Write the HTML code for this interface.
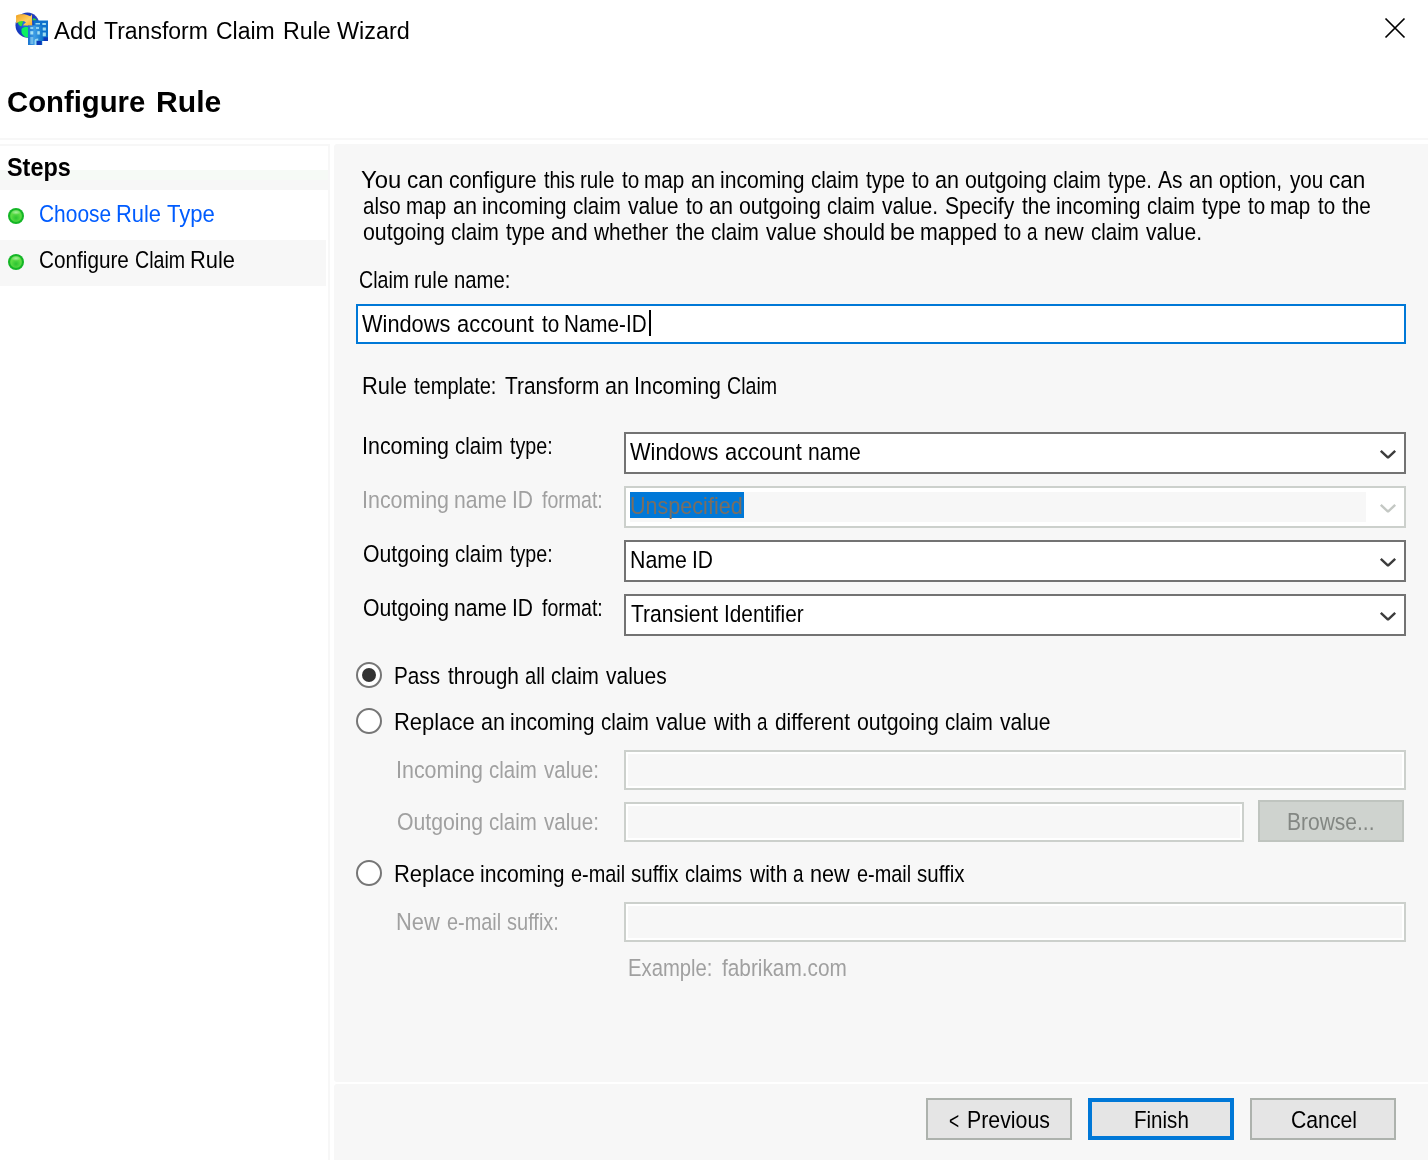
<!DOCTYPE html>
<html lang="en"><head><meta charset="utf-8"><title>Add Transform Claim Rule Wizard</title>
<style>
html,body{margin:0;padding:0}
body{width:1428px;height:1160px;position:relative;overflow:hidden;background:#fff;font-family:"Liberation Sans",sans-serif;}
.a{position:absolute;box-sizing:border-box}
.t{position:absolute;white-space:pre;transform-origin:0 0;line-height:normal;display:block}
.combo{position:absolute;box-sizing:border-box;left:624px;width:782px;height:42px;border:2px solid #737373;background:#fff}
.dis{position:absolute;box-sizing:border-box;border:2px solid #ccd0cc;background:#f7f7f7;box-shadow:inset 0 0 0 2px #fff}
.radio{position:absolute;box-sizing:border-box;left:356px;width:26px;height:26px;border-radius:50%;border:2px solid #767676;background:#fff}
.btn{position:absolute;box-sizing:border-box;top:1098px;width:146px;height:42px;border:2px solid #adb2ad;background:#e5e5e5}
.dot{position:absolute;width:16px;height:16px;border-radius:50%;left:8px;background:radial-gradient(ellipse 5px 2.5px at 50% 27%,#a8eea0 0,rgba(168,238,160,0) 100%),radial-gradient(circle closest-side at 50% 50%,rgba(20,182,38,0) 0,rgba(20,182,38,0) 66%,#14b626 80%,#14b626 100%),radial-gradient(circle 5px at 50% 62%,#2cc432 0,#5cdc44 100%)}
.ln{position:absolute;left:0;width:0;height:0;font-size:24.5px;line-height:1;color:#000}
.ln span{position:absolute;top:0;white-space:pre;transform-origin:0 0;display:block}
.t{line-height:1}

</style></head>
<body>
<!-- title bar icon -->
<svg class="a" style="left:10px;top:8px" width="44" height="42" viewBox="10 8 44 42">
 <defs>
  <radialGradient id="gl" cx="40%" cy="45%" r="65%"><stop offset="0" stop-color="#2a7ae0"/><stop offset="0.6" stop-color="#1438c0"/><stop offset="1" stop-color="#3a50b8"/></radialGradient>
  <linearGradient id="bf" x1="0" x2="1" y1="0" y2="0"><stop offset="0" stop-color="#1c74d0"/><stop offset="0.45" stop-color="#3c9ce4"/><stop offset="1" stop-color="#1478cc"/></linearGradient>
  <linearGradient id="ar" x1="0" x2="1" y1="0" y2="1"><stop offset="0" stop-color="#f0a020"/><stop offset="0.6" stop-color="#ffd060"/><stop offset="1" stop-color="#f8a828"/></linearGradient>
  <filter id="sf" x="-10%" y="-10%" width="120%" height="120%"><feGaussianBlur stdDeviation="0.55"/></filter>
  <clipPath id="gc"><ellipse cx="27.5" cy="25.2" rx="12" ry="12.6"/></clipPath>
 </defs>
 <g filter="url(#sf)">
  <ellipse cx="27.5" cy="25.2" rx="12" ry="12.6" fill="url(#gl)"/>
  <g clip-path="url(#gc)">
   <path d="M18.500 19.500c2-1.500 4-1 4.500 1s-1 3-1 4.500-2 1.500-3 0-2-4-.5-5.500z" fill="#30e038"/>
   <path d="M21.500 29c2-2 5-2.500 7-1.500v10c-3 .5-6-2-7-5z" fill="#08f060"/>
   <path d="M33 18.500c1.500-.5 3 .5 3.500 2h-4z" fill="#30d838"/>
  </g>
  <path d="M16 15.500C19.500 13.600 26 13.600 30.300 16.200L32 14.200L32.200 26L22.800 25.300L26 22.300C23 20.300 19.500 20.500 16.200 23.500z" fill="url(#ar)"/>
  <rect x="33.500" y="20.500" width="14.500" height="20.500" fill="#0c70cc"/>
  <rect x="43.500" y="37.300" width="4.500" height="3.700" fill="#0838b8"/>
  <g fill="#9cdcf0"><rect x="35.500" y="23" width="4.500" height="1.500"/><rect x="42.300" y="23" width="3.600" height="2"/><rect x="42.600" y="27.500" width="3.300" height="3"/><rect x="42.600" y="32.500" width="3.300" height="3.800"/></g>
  <rect x="28" y="25.400" width="14.200" height="19.600" fill="url(#bf)"/>
  <rect x="36.400" y="41" width="5.200" height="4" fill="#0838b8"/>
  <g fill="#a4e0f4"><rect x="30.300" y="27.200" width="3" height="1.600"/><rect x="36" y="27.200" width="3" height="1.600"/><rect x="30.300" y="31.200" width="3" height="3.300"/><rect x="37.300" y="31.200" width="2.500" height="3.300"/><rect x="30.300" y="37" width="3" height="7" opacity=".55"/><path d="M34.600 45v-4.200c0-1.600 1.200-2.300 3.600-2.300v2h-1.800v4.500z" opacity=".9"/></g>
 </g>
</svg>
<!-- close X -->
<svg class="a" style="left:1383px;top:16px" width="24" height="24" viewBox="0 0 24 24"><path d="M2.5 2.5L21.5 21.5M21.5 2.5L2.5 21.5" stroke="#000" stroke-width="1.700" fill="none"/></svg>
<!-- header separator -->
<div class="a" style="left:0;top:138px;width:1428px;height:2px;background:#f7f7f7"></div>
<!-- sidebar -->
<div class="a" style="left:-2px;top:144px;width:332px;height:1020px;border:2px solid #f7f7f7;background:#fff"></div>
<div class="a" style="left:0;top:170px;width:328px;height:10px;background:#f6faf6"></div>
<div class="a" style="left:0;top:180px;width:328px;height:10px;background:#f7f7f7"></div>
<div class="a" style="left:0;top:240px;width:326px;height:46px;background:#f7f7f7"></div>
<div class="dot" style="top:208px"></div>
<div class="dot" style="top:254px"></div>
<!-- main panel -->
<div class="a" style="left:334px;top:144px;width:1094px;height:938px;background:#f7f7f7;border-radius:3px 0 0 3px"></div>
<div class="a" style="left:334px;top:1084px;width:1094px;height:76px;background:#f7f7f7;border-radius:3px 0 0 0"></div>
<!-- text input -->
<div class="a" style="left:356px;top:304px;width:1050px;height:40px;border:2px solid #0078d7;background:#fff"></div>
<div class="a" style="left:649px;top:310px;width:2px;height:26px;background:#000"></div>
<!-- combos -->
<div class="combo" style="top:432px"></div>
<div class="dis" style="left:624px;top:486px;width:782px;height:42px;background:#fff"></div>
<div class="a" style="left:630px;top:492px;width:736px;height:30px;background:#f7f7f7"></div>
<div class="a" style="left:630px;top:492px;width:114px;height:26px;background:#0078d7"></div>
<div class="combo" style="top:540px"></div>
<div class="combo" style="top:594px"></div>
<svg class="a" style="left:1378px;top:448px" width="20" height="14" viewBox="0 0 20 14"><path d="M2.800 2.800L10 9.700L17.200 2.800" stroke="#3c3c3c" stroke-width="2.400" fill="none" stroke-linejoin="bevel"/></svg>
<svg class="a" style="left:1378px;top:502px" width="20" height="14" viewBox="0 0 20 14"><path d="M2.800 2.800L10 9.700L17.200 2.800" stroke="#c4c8c4" stroke-width="2.400" fill="none" stroke-linejoin="bevel"/></svg>
<svg class="a" style="left:1378px;top:556px" width="20" height="14" viewBox="0 0 20 14"><path d="M2.800 2.800L10 9.700L17.200 2.800" stroke="#3c3c3c" stroke-width="2.400" fill="none" stroke-linejoin="bevel"/></svg>
<svg class="a" style="left:1378px;top:610px" width="20" height="14" viewBox="0 0 20 14"><path d="M2.800 2.800L10 9.700L17.200 2.800" stroke="#3c3c3c" stroke-width="2.400" fill="none" stroke-linejoin="bevel"/></svg>
<!-- radios -->
<div class="radio" style="top:662px"></div>
<div class="a" style="left:362px;top:668px;width:14px;height:14px;border-radius:50%;background:#333"></div>
<div class="radio" style="top:708px"></div>
<div class="radio" style="top:860px"></div>
<!-- disabled text boxes -->
<div class="dis" style="left:624px;top:750px;width:782px;height:40px"></div>
<div class="dis" style="left:624px;top:802px;width:620px;height:40px"></div>
<div class="a" style="left:1258px;top:800px;width:146px;height:42px;border:2px solid #bfc4bf;background:#cfd3cf"></div>
<div class="dis" style="left:624px;top:902px;width:782px;height:40px"></div>
<!-- buttons -->
<div class="btn" style="left:926px"></div>
<div class="btn" style="left:1088px;border:4px solid #0078d7"></div>
<div class="btn" style="left:1250px"></div>

<div id="txt" style="position:absolute;left:0;top:0;width:1428px;height:1160px;will-change:transform">
<div id="s1" class="ln" style="top:202px;color:#005cff">
<span style="left:39.1px;transform:scaleX(0.854)">Choose </span><span style="left:116.2px;transform:scaleX(0.894)">Rule </span><span style="left:167.1px;transform:scaleX(0.902)">Type</span>
</div>
<div id="s2" class="ln" style="top:248px">
<span style="left:39.2px;transform:scaleX(0.846)">Configure </span><span style="left:135.2px;transform:scaleX(0.800)">Claim </span><span style="left:190.2px;transform:scaleX(0.894)">Rule</span>
</div>
<div id="p1" class="ln" style="top:168px">
<span style="left:361.0px;transform:scaleX(0.974)">You </span><span style="left:407.1px;transform:scaleX(0.919)">can </span><span style="left:449.1px;transform:scaleX(0.869)">configure </span><span style="left:544.0px;transform:scaleX(0.811)">this </span><span style="left:580.3px;transform:scaleX(0.842)">rule </span><span style="left:622.0px;transform:scaleX(0.842)">to </span><span style="left:644.3px;transform:scaleX(0.844)">map </span><span style="left:691.1px;transform:scaleX(0.880)">an </span><span style="left:720.3px;transform:scaleX(0.863)">incoming </span><span style="left:811.2px;transform:scaleX(0.836)">claim </span><span style="left:866.0px;transform:scaleX(0.844)">type </span><span style="left:912.0px;transform:scaleX(0.842)">to </span><span style="left:935.1px;transform:scaleX(0.880)">an </span><span style="left:965.1px;transform:scaleX(0.870)">outgoing </span><span style="left:1053.2px;transform:scaleX(0.836)">claim </span><span style="left:1108.0px;transform:scaleX(0.824)">type. </span><span style="left:1158.0px;transform:scaleX(0.857)">As </span><span style="left:1189.1px;transform:scaleX(0.880)">an </span><span style="left:1219.1px;transform:scaleX(0.857)">option, </span><span style="left:1290.0px;transform:scaleX(0.842)">you </span><span style="left:1329.1px;transform:scaleX(0.919)">can</span>
</div>
<div id="p2" class="ln" style="top:194px">
<span style="left:363.2px;transform:scaleX(0.837)">also </span><span style="left:406.3px;transform:scaleX(0.844)">map </span><span style="left:453.1px;transform:scaleX(0.880)">an </span><span style="left:482.3px;transform:scaleX(0.863)">incoming </span><span style="left:573.2px;transform:scaleX(0.836)">claim </span><span style="left:628.0px;transform:scaleX(0.862)">value </span><span style="left:686.0px;transform:scaleX(0.842)">to </span><span style="left:709.1px;transform:scaleX(0.880)">an </span><span style="left:739.1px;transform:scaleX(0.870)">outgoing </span><span style="left:827.2px;transform:scaleX(0.836)">claim </span><span style="left:882.0px;transform:scaleX(0.857)">value. </span><span style="left:945.1px;transform:scaleX(0.861)">Specify </span><span style="left:1022.0px;transform:scaleX(0.848)">the </span><span style="left:1056.3px;transform:scaleX(0.863)">incoming </span><span style="left:1147.2px;transform:scaleX(0.836)">claim </span><span style="left:1202.0px;transform:scaleX(0.844)">type </span><span style="left:1248.0px;transform:scaleX(0.842)">to </span><span style="left:1270.3px;transform:scaleX(0.844)">map </span><span style="left:1318.0px;transform:scaleX(0.842)">to </span><span style="left:1342.0px;transform:scaleX(0.848)">the</span>
</div>
<div id="p3" class="ln" style="top:220px">
<span style="left:363.1px;transform:scaleX(0.870)">outgoing </span><span style="left:451.2px;transform:scaleX(0.836)">claim </span><span style="left:506.0px;transform:scaleX(0.844)">type </span><span style="left:551.1px;transform:scaleX(0.895)">and </span><span style="left:594.0px;transform:scaleX(0.851)">whether </span><span style="left:676.0px;transform:scaleX(0.848)">the </span><span style="left:711.2px;transform:scaleX(0.836)">claim </span><span style="left:766.0px;transform:scaleX(0.862)">value </span><span style="left:823.1px;transform:scaleX(0.857)">should </span><span style="left:890.2px;transform:scaleX(0.917)">be </span><span style="left:920.3px;transform:scaleX(0.871)">mapped </span><span style="left:1004.0px;transform:scaleX(0.842)">to </span><span style="left:1027.2px;transform:scaleX(0.769)">a </span><span style="left:1044.2px;transform:scaleX(0.884)">new </span><span style="left:1091.2px;transform:scaleX(0.836)">claim </span><span style="left:1146.0px;transform:scaleX(0.857)">value.</span>
</div>
<div id="crn" class="ln" style="top:268px">
<span style="left:359.2px;transform:scaleX(0.800)">Claim </span><span style="left:414.3px;transform:scaleX(0.842)">rule </span><span style="left:454.3px;transform:scaleX(0.828)">name:</span>
</div>
<div id="inp" class="ln" style="top:312px">
<span style="left:362.0px;transform:scaleX(0.889)">Windows </span><span style="left:457.1px;transform:scaleX(0.894)">account </span><span style="left:542.0px;transform:scaleX(0.842)">to </span><span style="left:564.3px;transform:scaleX(0.842)">Name-ID</span>
</div>
<div id="rt" class="ln" style="top:374px">
<span style="left:362.2px;transform:scaleX(0.894)">Rule </span><span style="left:414.0px;transform:scaleX(0.818)">template: </span><span style="left:505.1px;transform:scaleX(0.852)">Transform </span><span style="left:605.1px;transform:scaleX(0.880)">an </span><span style="left:634.2px;transform:scaleX(0.875)">Incoming </span><span style="left:727.2px;transform:scaleX(0.800)">Claim</span>
</div>
<div id="l1" class="ln" style="top:434px">
<span style="left:362.2px;transform:scaleX(0.875)">Incoming </span><span style="left:455.2px;transform:scaleX(0.836)">claim </span><span style="left:510.0px;transform:scaleX(0.804)">type:</span>
</div>
<div id="l2" class="ln" style="top:488px;color:#a0a0a0">
<span style="left:362.2px;transform:scaleX(0.875)">Incoming </span><span style="left:454.3px;transform:scaleX(0.862)">name </span><span style="left:512.3px;transform:scaleX(0.857)">ID </span><span style="left:542.0px;transform:scaleX(0.797)">format:</span>
</div>
<div id="l3" class="ln" style="top:542px">
<span style="left:363.1px;transform:scaleX(0.866)">Outgoing </span><span style="left:455.2px;transform:scaleX(0.836)">claim </span><span style="left:510.0px;transform:scaleX(0.804)">type:</span>
</div>
<div id="l4" class="ln" style="top:596px">
<span style="left:363.1px;transform:scaleX(0.866)">Outgoing </span><span style="left:454.3px;transform:scaleX(0.862)">name </span><span style="left:512.3px;transform:scaleX(0.857)">ID </span><span style="left:542.0px;transform:scaleX(0.797)">format:</span>
</div>
<div id="c1" class="ln" style="top:440px">
<span style="left:630.0px;transform:scaleX(0.889)">Windows </span><span style="left:725.1px;transform:scaleX(0.894)">account </span><span style="left:808.3px;transform:scaleX(0.862)">name</span>
</div>
<div id="c2" class="ln" style="top:494px;color:#7a6e60">
<span style="left:630.2px;transform:scaleX(0.880)">Unspecified</span>
</div>
<div id="c3" class="ln" style="top:548px">
<span style="left:630.3px;transform:scaleX(0.871)">Name </span><span style="left:692.3px;transform:scaleX(0.857)">ID</span>
</div>
<div id="c4" class="ln" style="top:602px">
<span style="left:631.1px;transform:scaleX(0.860)">Transient </span><span style="left:724.3px;transform:scaleX(0.848)">Identifier</span>
</div>
<div id="r1" class="ln" style="top:664px">
<span style="left:394.3px;transform:scaleX(0.846)">Pass </span><span style="left:448.0px;transform:scaleX(0.854)">through </span><span style="left:525.2px;transform:scaleX(0.818)">all </span><span style="left:551.2px;transform:scaleX(0.836)">claim </span><span style="left:606.0px;transform:scaleX(0.857)">values</span>
</div>
<div id="r2" class="ln" style="top:710px">
<span style="left:394.2px;transform:scaleX(0.897)">Replace </span><span style="left:481.1px;transform:scaleX(0.880)">an </span><span style="left:510.3px;transform:scaleX(0.863)">incoming </span><span style="left:601.2px;transform:scaleX(0.836)">claim </span><span style="left:656.0px;transform:scaleX(0.862)">value </span><span style="left:714.0px;transform:scaleX(0.857)">with </span><span style="left:757.2px;transform:scaleX(0.769)">a </span><span style="left:775.1px;transform:scaleX(0.851)">different </span><span style="left:857.1px;transform:scaleX(0.870)">outgoing </span><span style="left:945.2px;transform:scaleX(0.836)">claim </span><span style="left:1000.0px;transform:scaleX(0.862)">value</span>
</div>
<div id="icv" class="ln" style="top:758px;color:#a0a0a0">
<span style="left:396.2px;transform:scaleX(0.875)">Incoming </span><span style="left:489.2px;transform:scaleX(0.836)">claim </span><span style="left:544.0px;transform:scaleX(0.841)">value:</span>
</div>
<div id="ocv" class="ln" style="top:810px;color:#a0a0a0">
<span style="left:397.1px;transform:scaleX(0.866)">Outgoing </span><span style="left:489.2px;transform:scaleX(0.836)">claim </span><span style="left:544.0px;transform:scaleX(0.841)">value:</span>
</div>
<div id="br" class="ln" style="top:810px;color:#838783">
<span style="left:1287.3px;transform:scaleX(0.857)">Browse...</span>
</div>
<div id="r3" class="ln" style="top:862px">
<span style="left:394.2px;transform:scaleX(0.897)">Replace </span><span style="left:480.3px;transform:scaleX(0.863)">incoming </span><span style="left:571.2px;transform:scaleX(0.812)">e-mail </span><span style="left:631.2px;transform:scaleX(0.836)">suffix </span><span style="left:685.2px;transform:scaleX(0.824)">claims </span><span style="left:750.0px;transform:scaleX(0.857)">with </span><span style="left:793.2px;transform:scaleX(0.769)">a </span><span style="left:810.2px;transform:scaleX(0.884)">new </span><span style="left:857.2px;transform:scaleX(0.812)">e-mail </span><span style="left:917.2px;transform:scaleX(0.836)">suffix</span>
</div>
<div id="nes" class="ln" style="top:910px;color:#a0a0a0">
<span style="left:396.2px;transform:scaleX(0.894)">New </span><span style="left:447.2px;transform:scaleX(0.812)">e-mail </span><span style="left:507.2px;transform:scaleX(0.817)">suffix:</span>
</div>
<div id="ex" class="ln" style="top:956px;color:#a0a0a0">
<span style="left:628.3px;transform:scaleX(0.827)">Example: </span><span style="left:722.0px;transform:scaleX(0.849)">fabrikam.com</span>
</div>
<div id="b1" class="ln" style="top:1108px">
<span style="left:967.3px;transform:scaleX(0.870)">Previous</span>
</div>
<div id="b2" class="ln" style="top:1108px">
<span style="left:1134.3px;transform:scaleX(0.839)">Finish</span>
</div>
<div id="b3" class="ln" style="top:1108px">
<span style="left:1291.1px;transform:scaleX(0.865)">Cancel</span>
</div>
<span id="lt" class="t" style="left:948.77px;top:1109.00px;font-size:24px;color:#000;font-weight:400;transform:scaleX(0.725)">&lt; </span>
<span id="t1" class="t" style="left:53.75px;top:19.60px;font-size:23.5px;color:#000;font-weight:400;transform:scaleX(1.019)">Add </span>
<span id="t2" class="t" style="left:103.52px;top:19.60px;font-size:23.5px;color:#000;font-weight:400;transform:scaleX(0.978)">Transform </span>
<span id="t3" class="t" style="left:216.02px;top:19.60px;font-size:23.5px;color:#000;font-weight:400;transform:scaleX(0.978)">Claim </span>
<span id="t4" class="t" style="left:283.02px;top:19.60px;font-size:23.5px;color:#000;font-weight:400;transform:scaleX(0.989)">Rule </span>
<span id="t5" class="t" style="left:337.00px;top:19.60px;font-size:23.5px;color:#000;font-weight:400;transform:scaleX(0.997)">Wizard </span>
<span id="h1a" class="t" style="left:6.79px;top:88.00px;font-size:29px;color:#000;font-weight:700;transform:scaleX(1.010)">Configure </span>
<span id="h1b" class="t" style="left:155.92px;top:88.00px;font-size:29px;color:#000;font-weight:700;transform:scaleX(1.038)">Rule </span>
<span id="steps" class="t" style="left:6.90px;top:154.00px;font-size:26px;color:#000;font-weight:700;transform:scaleX(0.901)">Steps </span>
</div>
</body></html>
